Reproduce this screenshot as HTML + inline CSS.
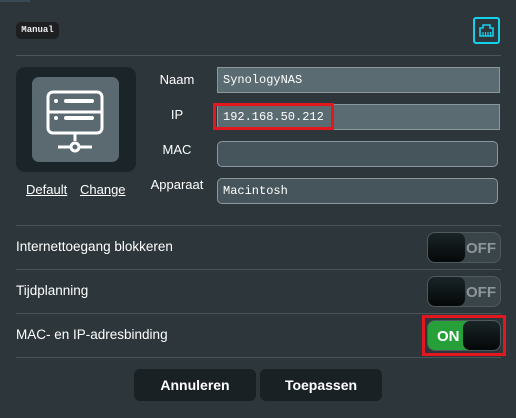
<!DOCTYPE html>
<html><head><style>
*{margin:0;padding:0;box-sizing:border-box}
body{width:516px;height:418px;background:#2c363b;font-family:"Liberation Sans",sans-serif;color:#fff;position:relative;overflow:hidden}
.a{position:absolute}
.badge{left:16px;top:22px;width:43px;height:17px;background:#1d1f20;border-radius:5px;font:bold 9px "Liberation Mono",monospace;line-height:17px;text-align:center;color:#eee}
.hl{height:1px;background:#4a5559;left:16px;width:485px}
.lab{font-size:13px;text-align:center;width:80px;left:137px}
.inp{left:217px;width:283px;height:26px;background:#5b6b72;border:1px solid #8a989e;font:12px "Liberation Mono",monospace;line-height:24px;padding-left:5px;color:#fff}
.row{left:16px;font-size:13.5px}
.tg{left:427px;width:74px;height:31px;border-radius:8px;background:#3a4549;border:1px solid #4f5a5e}
.knob{position:absolute;top:0;width:37px;height:29px;border-radius:7px;background:linear-gradient(#1a2428,#050808)}
.off{position:absolute;right:4px;top:7px;font-size:15px;font-weight:bold;color:#8d979b}
.btn{top:369px;width:122px;height:32px;background:#1a2125;border-radius:6px;font-weight:bold;font-size:14px;text-align:center;line-height:32px}
u{text-decoration:underline}
</style></head><body>
<div class="a" style="left:0;top:0;width:30px;height:2px;background:#3a4a55"></div>
<div class="a badge">Manual</div>
<div class="a" style="left:473px;top:17px;width:27px;height:27px;border:2px solid #17d0ea;border-radius:3px">
<svg width="23" height="23" viewBox="0 0 23 23" style="position:absolute;left:0;top:0"><path d="M5 17V9h3V6h7v3h3v8z" fill="none" stroke="#17d0ea" stroke-width="1.6"/><path d="M8 13v4M10.5 13v4M13 13v4M15.5 13v4" stroke="#17d0ea" stroke-width="1.2"/></svg></div>
<div class="a hl" style="top:55px"></div>
<div class="a" style="left:16px;top:67px;width:120px;height:105px;background:#1b2428;border-radius:9px"></div>
<div class="a" style="left:32px;top:77px;width:87px;height:85px;background:#5a6a70;border-radius:7px">
<svg width="87" height="85" viewBox="0 0 87 85"><g fill="none" stroke="#fff" stroke-width="3"><rect x="16" y="15" width="54" height="41" rx="5"/><line x1="16" y1="35" x2="70" y2="35"/><line x1="43" y1="56" x2="43" y2="64"/><line x1="26" y1="70" x2="38" y2="70"/><line x1="48" y1="70" x2="60" y2="70"/><circle cx="43" cy="70" r="4"/></g><g fill="#fff"><circle cx="24" cy="24" r="2"/><circle cx="24" cy="41" r="2"/><rect x="32" y="22" width="30" height="4" rx="2"/><rect x="32" y="39" width="30" height="4" rx="2"/></g></svg></div>
<div class="a" style="left:26px;top:182px;font-size:13px"><u>Default </u></div>
<div class="a" style="left:80px;top:182px;font-size:13px"><u>Change</u></div>
<div class="a lab" style="top:72px">Naam</div>
<div class="a lab" style="top:107px">IP</div>
<div class="a lab" style="top:142px">MAC</div>
<div class="a lab" style="top:177px">Apparaat</div>
<div class="a inp" style="top:67px">SynologyNAS</div>
<div class="a inp" style="top:104px">192.168.50.212</div>
<div class="a" style="left:213px;top:103px;width:121px;height:27px;border:3px solid #e4161e"></div>
<div class="a inp" style="top:141px;width:281px;background:#46555b;border-radius:5px"></div>
<div class="a inp" style="top:178px;width:281px;background:#46555b;border-radius:5px">Macintosh</div>
<div class="a hl" style="top:225px"></div>
<div class="a hl" style="top:269px"></div>
<div class="a hl" style="top:313px"></div>
<div class="a hl" style="top:357px"></div>
<div class="a row" style="top:239px">Internettoegang blokkeren</div>
<div class="a row" style="top:283px">Tijdplanning</div>
<div class="a row" style="top:327px">MAC- en IP-adresbinding</div>
<div class="a tg" style="top:232px"><div class="knob" style="left:0"></div><span class="off">OFF</span></div>
<div class="a tg" style="top:276px"><div class="knob" style="left:0"></div><span class="off">OFF</span></div>
<div class="a tg" style="top:320px;background:#27a03a"><span class="off" style="left:9px;color:#fff">ON</span><div class="knob" style="right:0"></div></div>
<div class="a" style="left:422px;top:315px;width:84px;height:41px;border:3px solid #e4161e"></div>
<div class="a btn" style="left:134px">Annuleren</div>
<div class="a btn" style="left:260px">Toepassen</div>
</body></html>
